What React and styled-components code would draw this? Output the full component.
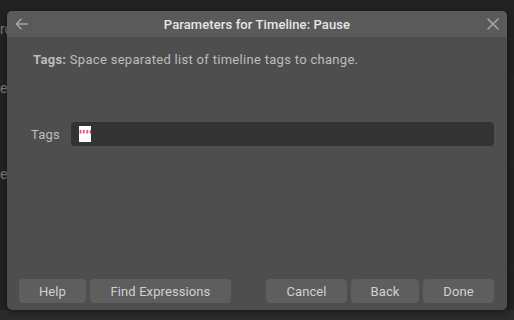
import React from "react";
import styled, { createGlobalStyle } from "styled-components";

const GlobalStyle = createGlobalStyle`
  html, body {
    margin: 0;
    padding: 0;
    background: #222222;
    font-family: Roboto, "Liberation Sans", sans-serif;
  }
`;

const Page = styled.div`
  position: relative;
  width: 514px;
  height: 320px;
  overflow: hidden;
  display: flex;
  flex-direction: column;
  background: #222222;
`;

const Backdrop = styled.div`
  flex: 1;
  display: flex;
  flex-direction: column;
  padding-top: 21px;
`;

const BackRow = styled.div`
  height: ${(p) => p.$h}px;
  flex: none;
  color: #7a7a7a;
  font-size: 14px;
  line-height: 16px;
  border-bottom: 1px solid #262626;
`;

const BackFooter = styled.div`
  height: 10px;
  background: #2b2b2b;
`;

const Dialog = styled.div`
  position: absolute;
  left: 7px;
  top: 11px;
  width: 500px;
  height: 299px;
  display: flex;
  flex-direction: column;
  background: #4e4e4e;
  border-radius: 5px;
  overflow: hidden;
  box-shadow: 0 2px 6px rgba(0, 0, 0, 0.45);
`;

const TitleBar = styled.div`
  height: 26px;
  flex: none;
  display: flex;
  align-items: center;
  justify-content: space-between;
  padding: 0 7px;
  background: #5a5a5a;
`;

const Title = styled.div`
  color: #e6e6e6;
  font-size: 13px;
  font-weight: 500;
  letter-spacing: 0.1px;
`;

const IconButton = styled.div`
  width: 14px;
  height: 14px;
  display: flex;
  align-items: center;
  justify-content: center;
`;

const Body = styled.div`
  flex: 1;
  display: flex;
  flex-direction: column;
  padding: 15px 13px 7px 12px;
`;

const Description = styled.div`
  padding-left: 14px;
  color: #bdbdbd;
  font-size: 13px;
  line-height: 16px;
  letter-spacing: 0.3px;
  b {
    font-weight: 700;
  }
`;

const FieldRow = styled.div`
  display: flex;
  align-items: center;
  margin-top: 54px;
  padding-left: 12px;
`;

const FieldLabel = styled.div`
  width: 40px;
  color: #bdbdbd;
  font-size: 13px;
  letter-spacing: 0.2px;
`;

const FieldInput = styled.div`
  flex: 1;
  height: 24px;
  display: flex;
  align-items: center;
  padding-left: 8px;
  background: #333333;
  border-radius: 4px;
`;

const Literal = styled.span`
  display: inline-flex;
  align-items: flex-start;
  justify-content: center;
  width: 12px;
  height: 16px;
  background: #ffffff;
  color: #f0438f;
  font-family: "DejaVu Sans Mono", monospace;
  font-size: 13px;
  font-weight: 700;
  line-height: 18px;
  letter-spacing: -1px;
  overflow: hidden;
`;

const Spacer = styled.div`
  flex: 1;
`;

const Footer = styled.div`
  display: flex;
  align-items: center;
  gap: 4px;
`;

const Button = styled.button`
  width: ${(p) => p.$w}px;
  height: 24px;
  border: none;
  border-radius: 4px;
  background: #5e5e5e;
  color: #d0d0d0;
  font-family: Roboto, "Liberation Sans", sans-serif;
  font-size: 13px;
  letter-spacing: 0.1px;
  padding: 0;
`;

const BackArrow = () => (
  <svg width="13" height="12" viewBox="0 0 13 12" fill="none">
    <path d="M12 6H1.5M6 1.2L1.2 6L6 10.8" stroke="#a8a8a8" strokeWidth="1.5" strokeLinecap="round" strokeLinejoin="round" />
  </svg>
);

const CloseIcon = () => (
  <svg width="12" height="12" viewBox="0 0 12 12" fill="none">
    <path d="M1 1L11 11M11 1L1 11" stroke="#a8a8a8" strokeWidth="1.5" strokeLinecap="round" />
  </svg>
);

const App = () => {
  return (
    <Page>
      <GlobalStyle />
      <Backdrop>
        <BackRow $h={58}>ro</BackRow>
        <BackRow $h={85}>e</BackRow>
        <BackRow $h={100}>eg</BackRow>
        <Spacer />
      </Backdrop>
      <BackFooter />
      <Dialog>
        <TitleBar>
          <IconButton>
            <BackArrow />
          </IconButton>
          <Title>Parameters for Timeline: Pause</Title>
          <IconButton>
            <CloseIcon />
          </IconButton>
        </TitleBar>
        <Body>
          <Description>
            <b>Tags:</b> Space separated list of timeline tags to change.
          </Description>
          <FieldRow>
            <FieldLabel>Tags</FieldLabel>
            <FieldInput>
              <Literal>""</Literal>
            </FieldInput>
          </FieldRow>
          <Spacer />
          <Footer>
            <Button $w={67}>Help</Button>
            <Button $w={141}>Find Expressions</Button>
            <Spacer />
            <Button $w={81}>Cancel</Button>
            <Button $w={68}>Back</Button>
            <Button $w={71}>Done</Button>
          </Footer>
        </Body>
      </Dialog>
    </Page>
  );
};

export default App;
